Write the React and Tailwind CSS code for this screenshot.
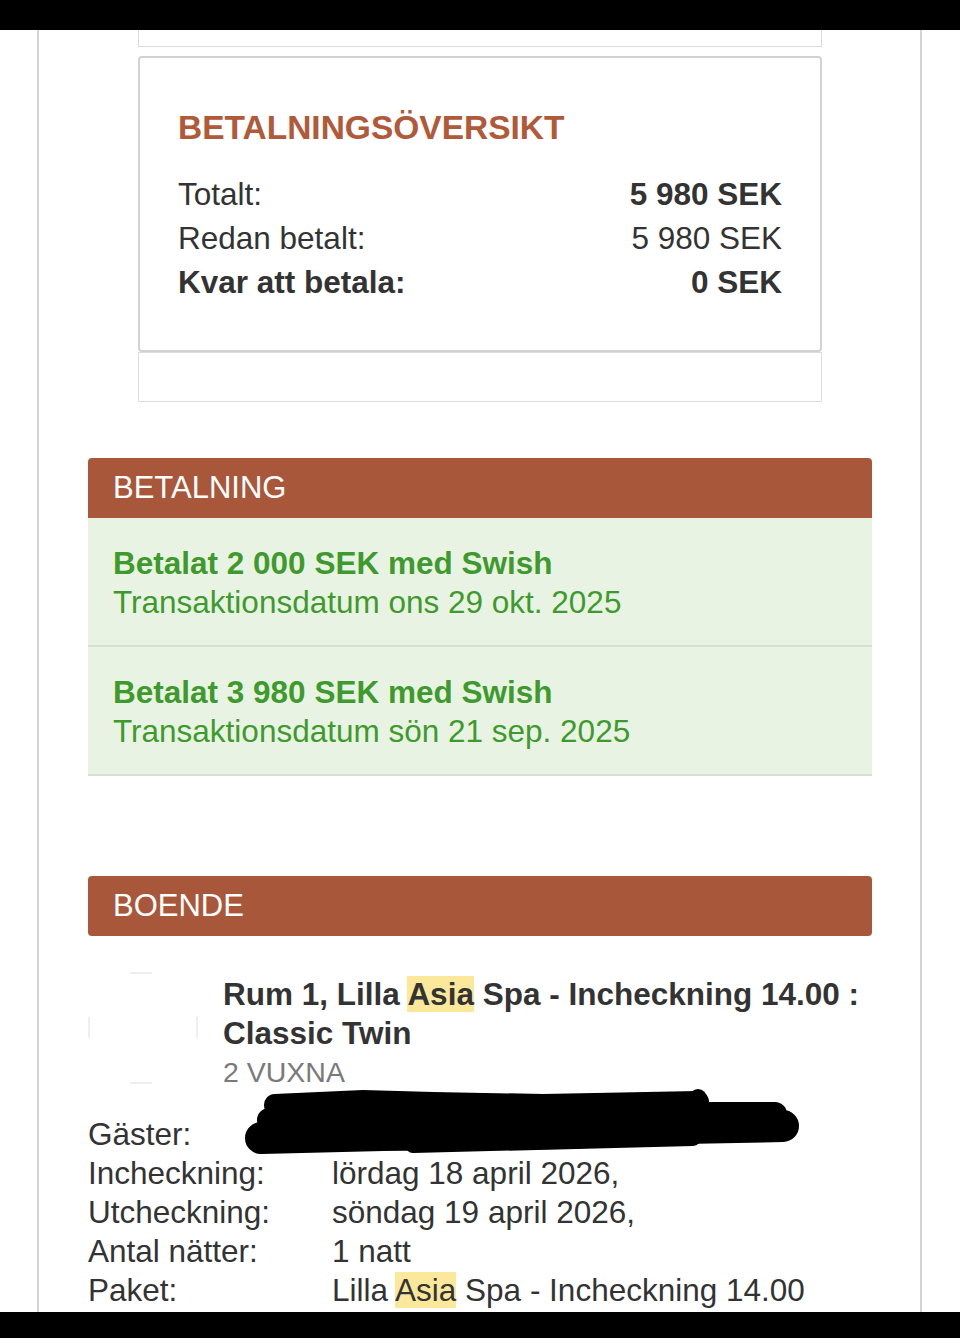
import React from 'react';

const payments = [
    { amount: '2 000', date: 'ons 29 okt. 2025' },
    { amount: '3 980', date: 'sön 21 sep. 2025' },
];

const Hl = ({ children }) => <span className="bg-[#fbe89b]">{children}</span>;

const App = () => {
    return (
        <div className="min-h-[1338px] bg-white font-['Liberation_Sans',Arial,sans-serif] text-[#333]">
            <div className="h-[30px] bg-black" />

            {/* ************************************************************************ */}
            <div className="ml-[37px] w-[885px] h-[1282px] border-x-2 border-[#d4d4d4] overflow-hidden">
                {/* top stub */}
                <div className="ml-[99px] w-[684px] h-[17px] border-x border-b border-[#dcdcdc]" />

                {/* payment overview */}
                <div className="ml-[99px] mt-[9px] w-[684px] h-[296px] border-2 border-[#d2d2d2] rounded-[4px] px-[38px] pt-[50px]">
                    <h2 className="text-[33.5px] leading-[40px] font-bold text-[#b05a3a]">BETALNINGSÖVERSIKT</h2>
                    <div className="mt-[24px] text-[31.5px] leading-[44px]">
                        <div className="flex justify-between">
                            <span>Totalt:</span>
                            <span className="font-bold">5 980 SEK</span>
                        </div>
                        <div className="flex justify-between">
                            <span>Redan betalt:</span>
                            <span>5 980 SEK</span>
                        </div>
                        <div className="flex justify-between font-bold">
                            <span>Kvar att betala:</span>
                            <span>0 SEK</span>
                        </div>
                    </div>
                </div>
                <div className="ml-[99px] w-[684px] h-[50px] border border-[#dcdcdc]" />

                {/* BETALNING */}
                <div className="ml-[49px] w-[784px] mt-[56px]">
                    <div className="h-[60px] bg-[#a9573a] rounded-t-[4px] px-[25px] flex items-center text-white text-[31px]">
                        BETALNING
                    </div>
                    {payments.map((p, idx) => (
                        <div key={idx} className="bg-[#e9f3e3] border-b-2 border-[#d6e0d1] px-[25px] pt-[26px] pb-[23px] text-[#3f9a2d] text-[31.5px] leading-[39px]">
                            <div className="font-bold">Betalat {p.amount} SEK med Swish</div>
                            <div>Transaktionsdatum {p.date}</div>
                        </div>
                    ))}
                </div>

                {/* BOENDE */}
                <div className="ml-[49px] w-[784px] mt-[100px]">
                    <div className="h-[60px] bg-[#a9573a] rounded-[4px] px-[25px] flex items-center text-white text-[31px]">
                        BOENDE
                    </div>

                    <div className="mt-[36px] flex gap-[25px]">
                        <svg width="110" height="112" viewBox="0 0 110 112" className="shrink-0">
                            <line x1="42" y1="1" x2="64" y2="1" stroke="#dedede" strokeWidth="1" />
                            <line x1="42" y1="111" x2="64" y2="111" stroke="#dedede" strokeWidth="1" />
                            <line x1="1" y1="45" x2="1" y2="66" stroke="#dedede" strokeWidth="1" />
                            <line x1="109" y1="45" x2="109" y2="66" stroke="#dedede" strokeWidth="1" />
                        </svg>
                        <div className="pt-[3px]">
                            <div className="text-[31.5px] leading-[39px] font-bold">
                                Rum 1, Lilla <Hl>Asia</Hl> Spa - Incheckning 14.00 :<br />Classic Twin
                            </div>
                            <div className="text-[28.5px] leading-[39px] text-[#7a7a7a]">2 VUXNA</div>
                        </div>
                    </div>

                    {/* details */}
                    <div className="relative mt-[23px] grid grid-cols-[244px_1fr] text-[31.5px] leading-[39px]">
                        <div>Gäster:</div>
                        <div />
                        <div>Incheckning:</div>
                        <div>lördag 18 april 2026,</div>
                        <div>Utcheckning:</div>
                        <div>söndag 19 april 2026,</div>
                        <div>Antal nätter:</div>
                        <div>1 natt</div>
                        <div>Paket:</div>
                        <div>Lilla <Hl>Asia</Hl> Spa - Incheckning 14.00</div>

                        {/* redaction scribble */}
                        <svg className="absolute left-[155px] top-[-27px]" width="565" height="72" viewBox="0 0 565 72">
                            <path d="M32 17 L120 13 L190 15 L300 17 L455 14" stroke="#000" strokeWidth="22" strokeLinecap="round" fill="none" />
                            <circle cx="455" cy="10" r="9" fill="#000" />
                            <path d="M18 50 L140 47 L320 45 L440 40 L540 38" stroke="#000" strokeWidth="32" strokeLinecap="round" fill="none" />
                            <path d="M26 32 L200 28 L380 26 L532 26" stroke="#000" strokeWidth="24" strokeLinecap="round" fill="none" />
                            <path d="M170 57 L450 50" stroke="#000" strokeWidth="16" strokeLinecap="round" fill="none" />
                        </svg>
                    </div>
                </div>
            </div>

            <div className="h-[26px] bg-black" />
        </div>
    );
};

export default App;
